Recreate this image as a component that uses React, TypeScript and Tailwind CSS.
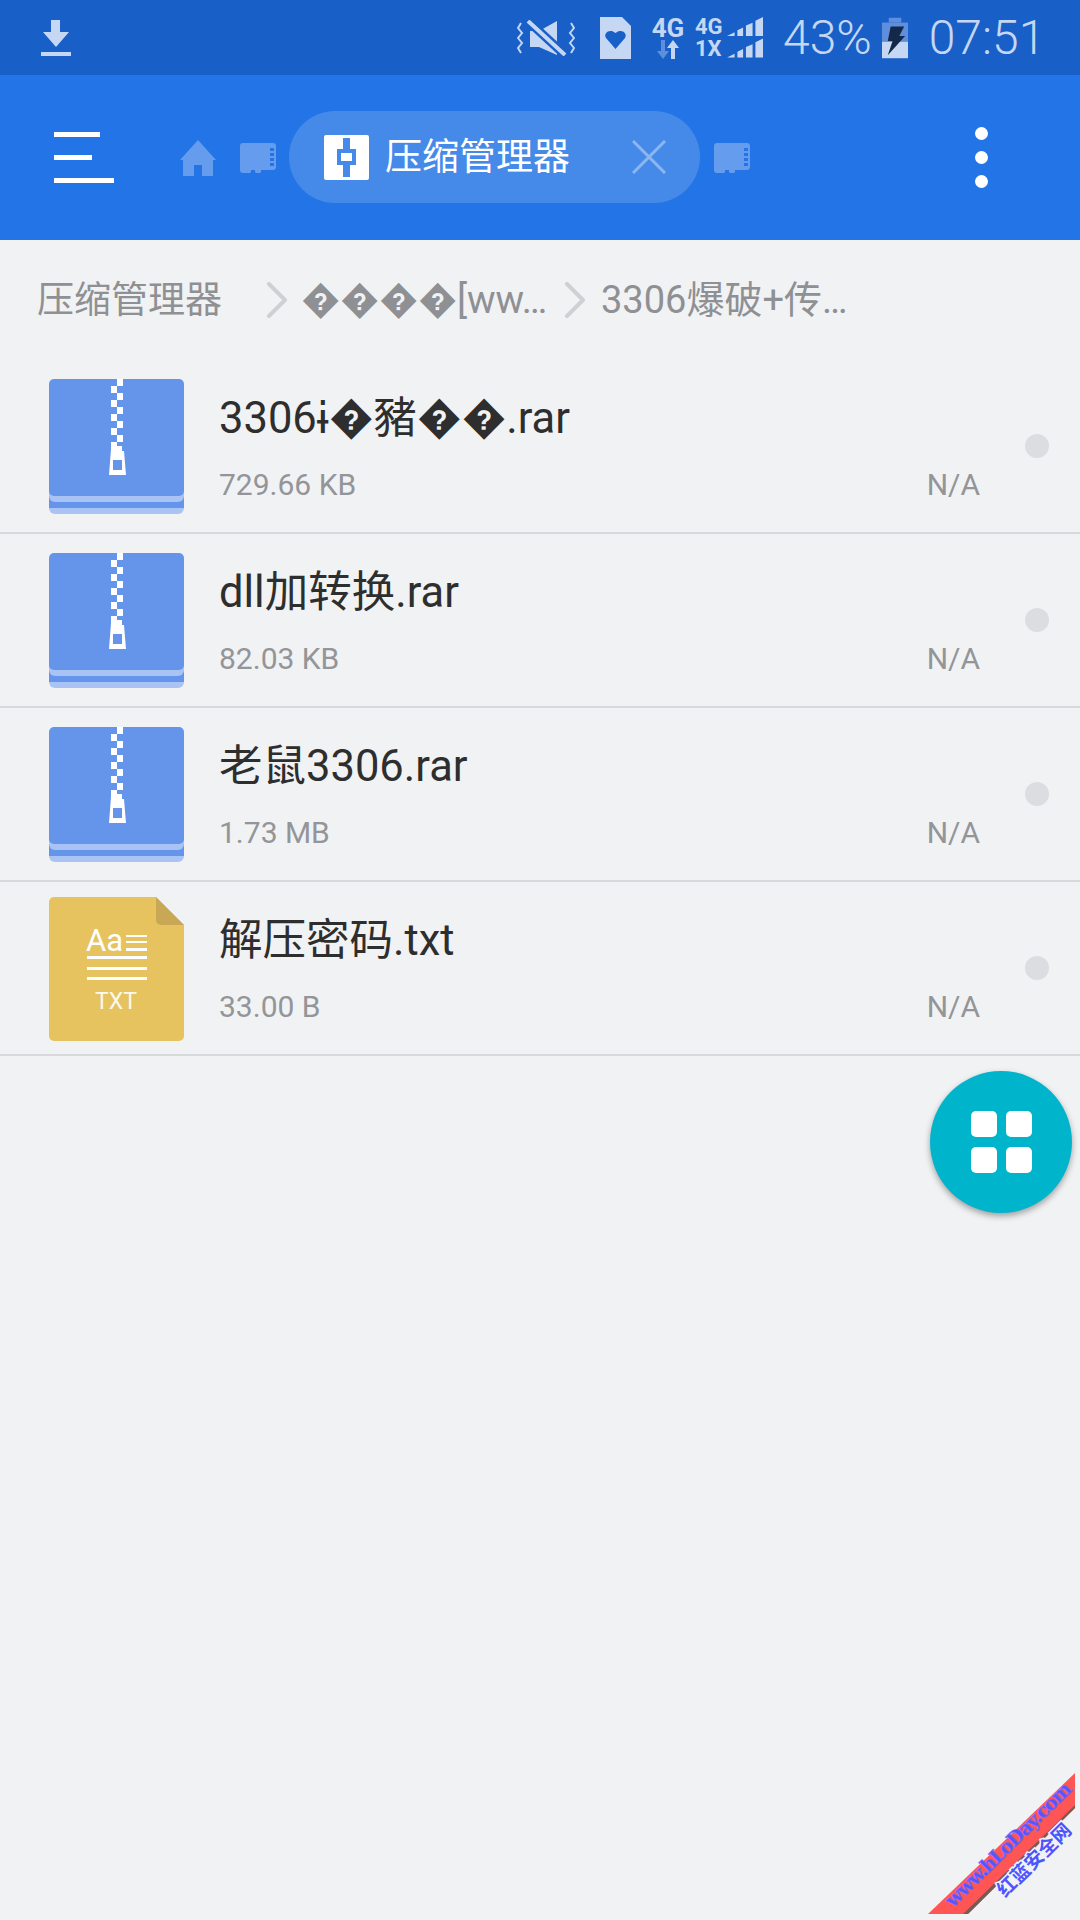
const files = [
  { name: "3306ɨ\uFFFD豬\uFFFD\uFFFD.rar", size: "729.66 KB", kind: "rar" },
  { name: "dll加转换.rar", size: "82.03 KB", kind: "rar" },
  { name: "老鼠3306.rar", size: "1.73 MB", kind: "rar" },
  { name: "解压密码.txt", size: "33.00 B", kind: "txt" },
];

const sans = "font-['Roboto','Noto_Sans_CJK_SC','DejaVu_Sans',sans-serif]";

function SdCard({ className }: { className: string }) {
  return (
    <svg viewBox="0 0 36 30" className={className}>
      <path d="M3 0h30a3 3 0 0 1 3 3v21a3 3 0 0 1-3 3H21v2l-1 1h-4l-1-1v-2h-4v2l-1 1H3a3 3 0 0 1-3-3V3a3 3 0 0 1 3-3z" fill="#669cee" />
      <g fill="#2374e6">
        <rect x="30" y="5" width="4" height="3" />
        <rect x="30" y="10" width="4" height="3" />
        <rect x="30" y="15" width="4" height="3" />
        <rect x="30" y="20" width="4" height="3" />
      </g>
    </svg>
  );
}

function Chevron({ className }: { className: string }) {
  return (
    <svg viewBox="0 0 22 36" className={className} fill="none" stroke="#cfd0d3" strokeWidth="4" strokeLinecap="round" strokeLinejoin="round">
      <path d="M3 2l16 16L3 34" />
    </svg>
  );
}

function RarIcon() {
  const teeth = [0, 1, 2, 3, 4, 5, 6, 7, 8, 9];
  return (
    <svg viewBox="0 0 135 135" className="h-[135px] w-[135px] shrink-0">
      <path d="M0 110h135v19a6 6 0 0 1-6 6H6a6 6 0 0 1-6-6z" fill="#a9c3f4" />
      <rect x="0" y="117" width="135" height="12" fill="#6595ea" />
      <path d="M0 110h135v7a6 6 0 0 1-6 6H6a6 6 0 0 1-6-6z" fill="#a9c3f4" />
      <path d="M5 0h125a5 5 0 0 1 5 5v107a5 5 0 0 1-5 5H5a5 5 0 0 1-5-5V5a5 5 0 0 1 5-5z" fill="#6595ea" />
      {teeth.map((t) => (
        <rect key={t} x={t % 2 === 0 ? 68 : 62} y={t * 7} width="6" height="7" fill="#fff" />
      ))}
      <path d="M62 70h5v-3h6v5h2l2 24H60z" fill="#fff" />
      <rect x="64" y="81" width="9" height="10" fill="#6595ea" />
    </svg>
  );
}

function TxtIcon() {
  return (
    <svg viewBox="0 0 135 144" className="mt-[2px] h-[144px] w-[135px] shrink-0">
      <path d="M5 0h102l28 28v111a5 5 0 0 1-5 5H5a5 5 0 0 1-5-5V5a5 5 0 0 1 5-5z" fill="#e6c35f" />
      <path d="M107 0l28 28H112a5 5 0 0 1-5-5z" fill="#c9a855" />
      <text x="37" y="54" fill="#fff" fontSize="31" fontFamily="Roboto, sans-serif">Aa</text>
      <g fill="#fff">
        <rect x="77" y="38" width="21" height="2" />
        <rect x="77" y="44" width="21" height="2" />
        <rect x="77" y="51" width="21" height="3" />
        <rect x="38" y="59" width="60" height="3" />
        <rect x="38" y="70" width="60" height="3" />
        <rect x="38" y="80" width="60" height="3" />
      </g>
      <text x="67" y="112" fill="#fff" fontSize="23" textAnchor="middle" fontFamily="Roboto, sans-serif" opacity="0.9">TXT</text>
    </svg>
  );
}

function Signal({ className }: { className: string }) {
  return (
    <svg viewBox="0 0 38 20" className={className} fill="#c5d7f2">
      <path d="M0 20l8-4v4zM11 14l6-3v9h-6zM20 9l7-3v14h-7zM30 4l8-4v20h-8z" />
    </svg>
  );
}

export default function App() {
  return (
    <div className={`relative h-[1920px] w-[1080px] overflow-hidden bg-[#f1f2f4] ${sans}`}>
      {/* status bar */}
      <div className="flex h-[75px] items-center bg-[#1860c8] text-[#c5d7f2]">
        <svg viewBox="0 0 30 36" className="ml-[41px] h-[36px] w-[30px]" fill="#c5d7f2">
          <path d="M10 0h9v12h9L15 27 2 12h8z" />
          <rect x="0" y="32" width="30" height="4" />
        </svg>
        <svg viewBox="0 0 58 36" className="ml-[446px] h-[36px] w-[58px]" fill="none" stroke="#c5d7f2">
          <path d="M4 3L1 8l4 5-4 5 4 5-4 5 3 5M54 3l3 5-4 5 4 5-4 5 4 5-3 5" strokeWidth="2" />
          <path d="M13 11h9L40 1v34L22 27h-9z" fill="#c5d7f2" stroke="none" />
          <path d="M10 0l37 34" strokeWidth="9" stroke="#1860c8" />
          <path d="M11 1l37 34" strokeWidth="4" />
        </svg>
        <svg viewBox="0 0 31 42" className="ml-[25px] h-[42px] w-[31px]">
          <path d="M0 0h22l9 9v33H0z" fill="#c5d7f2" />
          <path d="M15.500 32L6 21c-3-5 4-10 9.500-5 5.500-5 12.500 0 9.500 5z" fill="#1860c8" />
        </svg>
        <div className="ml-[20px] flex w-[34px] flex-col items-center leading-none">
          <span className="text-[26px] font-bold leading-[24px]">4G</span>
          <svg viewBox="0 0 26 20" className="h-[20px] w-[26px]">
            <path d="M6 0h4v11h4l-6 8-6-8h4z" fill="#5f8fdc" />
            <path d="M16 8l0 11h4V8h4l-6-8-6 8z" fill="#c5d7f2" />
          </svg>
        </div>
        <div className="ml-[10px] flex w-[32px] flex-col text-[22px] font-bold leading-[22px]">
          <span>4G</span>
          <span>1X</span>
        </div>
        <div className="flex flex-col gap-[2px]">
          <Signal className="h-[19px] w-[36px]" />
          <Signal className="h-[20px] w-[36px]" />
        </div>
        <span className="ml-[20px] text-[48px] font-light leading-none">43%</span>
        <svg viewBox="0 0 27 42" className="ml-[10px] h-[42px] w-[26px]">
          <rect x="7" y="0" width="13" height="5" fill="#5f8fdc" />
          <rect x="0" y="5" width="27" height="21" fill="#5f8fdc" />
          <rect x="0" y="25" width="27" height="17" fill="#c5d7f2" />
          <path d="M9 9h14l-5 10h6L6 39l5-15H6z" fill="#14284a" />
        </svg>
        <span className="ml-[21px] text-[48px] font-light leading-none">07:51</span>
      </div>

      {/* toolbar */}
      <div className="flex h-[165px] items-center bg-[#2374e6]">
        <div className="ml-[54px] flex w-[60px] flex-col gap-[18px]">
          <div className="h-[5px] w-[46px] bg-white" />
          <div className="h-[5px] w-[38px] bg-white" />
          <div className="h-[5px] w-[60px] bg-white" />
        </div>
        <svg viewBox="0 0 36 36" className="ml-[66px] h-[36px] w-[36px]" fill="#669cee">
          <path d="M18 0l18 20h-3v16H22V25h-8v11H3V20H0z" />
        </svg>
        <SdCard className="ml-[24px] h-[30px] w-[36px]" />
        <div className="mb-[1px] ml-[13px] flex h-[92px] w-[411px] items-center rounded-full bg-[#458ae9]">
          <svg viewBox="0 0 45 45" className="ml-[35px] h-[45px] w-[45px]">
            <rect width="45" height="45" rx="2" fill="#fff" />
            <path d="M19 3h7v11h6v16h-6v12h-7V30h-6V14h6z" fill="#458ae9" />
            <rect x="17" y="18" width="11" height="8" fill="#fff" />
          </svg>
          <span className="ml-[16px] text-[37px] leading-none text-white">压缩管理器</span>
          <svg viewBox="0 0 34 34" className="ml-[62px] h-[34px] w-[34px]" stroke="#8db6f1" strokeWidth="3">
            <path d="M1 1l32 32M33 1L1 33" />
          </svg>
        </div>
        <SdCard className="ml-[14px] h-[30px] w-[36px]" />
        <div className="ml-[225px] flex flex-col gap-[11px]">
          <div className="h-[13px] w-[13px] rounded-full bg-white" />
          <div className="h-[13px] w-[13px] rounded-full bg-white" />
          <div className="h-[13px] w-[13px] rounded-full bg-white" />
        </div>
      </div>

      {/* breadcrumb */}
      <div className="flex h-[120px] items-center pl-[37px] text-[38px] leading-none text-[#8e9093]">
        <span className="text-[37px]">压缩管理器</span>
        <Chevron className="ml-[44px] h-[36px] w-[22px]" />
        <span className="ml-[13px] w-[252px] whitespace-nowrap">{"\uFFFD\uFFFD\uFFFD\uFFFD"}[ww…</span>
        <Chevron className="ml-[11px] h-[36px] w-[22px]" />
        <span className="ml-[15px]">3306爆破+传…</span>
      </div>

      {/* file list */}
      <div>
        {files.map((f) => (
          <div key={f.name} className="flex h-[174px] items-center border-b-2 border-[#d8d9dc] pl-[49px]">
            {f.kind === "rar" ? <RarIcon /> : <TxtIcon />}
            <div className="ml-[35px] flex-1 pt-[4px]">
              <div className="text-[43.5px] leading-[50px] text-[#2e2e2e]">{f.name}</div>
              <div className="mt-[24px] flex justify-between text-[30px] leading-[34px] text-[#939598]">
                <span>{f.size}</span>
                <span>N/A</span>
              </div>
            </div>
            <div className="ml-[45px] mr-[31px] h-[24px] w-[24px] rounded-full bg-[#dcdde0]" />
          </div>
        ))}
      </div>

      {/* fab */}
      <div className="absolute left-[930px] top-[1071px] grid h-[142px] w-[142px] grid-cols-[26px_26px] content-center justify-center gap-x-[9px] gap-y-[10px] rounded-full bg-[#00b4cc] shadow-[0_3px_6px_rgba(0,0,0,0.35)]">
        <div className="h-[26px] w-[26px] rounded-[5px] bg-white" />
        <div className="h-[26px] w-[26px] rounded-[5px] bg-white" />
        <div className="h-[26px] w-[26px] rounded-[5px] bg-white" />
        <div className="h-[26px] w-[26px] rounded-[5px] bg-white" />
      </div>

      {/* watermark */}
      <svg viewBox="0 0 160 150" className="absolute left-[920px] top-[1770px] h-[150px] w-[160px]">
        <path d="M155 3v35L48 144H8z" fill="#ff5555" />
        <path d="M155 35v3L48 144h-5z" fill="#7a5a55" />
        <text transform="translate(33 138) rotate(-44.5)" fill="#5555ff" stroke="#7a6cff" strokeWidth="0.6" fontSize="19" fontWeight="bold" fontFamily="'DejaVu Serif', serif" textLength="168">www.hLoDay.com</text>
        <text transform="translate(85 128) rotate(-44.5)" fill="#4a55ff" stroke="#f1f2f4" strokeWidth="3" paintOrder="stroke" fontSize="19" fontWeight="bold" fontFamily="'Noto Sans CJK SC', sans-serif">红蓝安全网</text>
      </svg>
    </div>
  );
}
